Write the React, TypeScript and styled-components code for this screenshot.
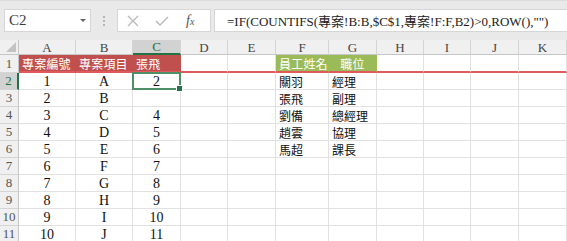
import React from 'react'
import styled, { createGlobalStyle } from 'styled-components'

const GlobalStyle = createGlobalStyle`
  html, body {
    margin: 0;
    padding: 0;
    background: #ffffff;
  }
  * {
    box-sizing: border-box;
  }
`

const SERIF = `"Liberation Serif", "Noto Sans CJK TC", serif`
const CJK = `"Noto Sans CJK TC", "Liberation Sans", sans-serif`

const Sheet = styled.div`
  width: 567px;
  height: 241px;
  overflow: hidden;
  background: #ffffff;
`

const FormulaBar = styled.div`
  display: flex;
  align-items: center;
  height: 40px;
  padding: 0 0 0 4px;
  background: #e9e9e9;
  border-top: 1px solid #dcdcdc;
`

const NameBox = styled.div`
  display: flex;
  align-items: center;
  justify-content: space-between;
  width: 87px;
  height: 23px;
  padding: 0 4px 0 4px;
  background: #ffffff;
  border: 1px solid #d6d6d6;
  font-family: ${SERIF};
  font-size: 15px;
  color: #3c3c3c;
`

const Caret = styled.span`
  width: 0;
  height: 0;
  border-left: 3px solid transparent;
  border-right: 3px solid transparent;
  border-top: 3px solid #666666;
`

const Grip = styled.div`
  display: flex;
  flex-direction: column;
  gap: 2px;
  margin: 0 12px 0 12px;
  span {
    width: 2px;
    height: 2px;
    background: #b4b4b4;
  }
`

const ButtonGroup = styled.div`
  display: flex;
  align-items: center;
  width: 94px;
  height: 23px;
  background: #ffffff;
  border: 1px solid #d6d6d6;
  padding-left: 8px;
  gap: 14px;
  color: #b0b0b0;
`

const Fx = styled.span`
  font-family: ${SERIF};
  font-style: italic;
  font-size: 14px;
  color: #555555;
  margin-left: 2px;
  sub {
    font-size: 10px;
    vertical-align: baseline;
  }
`

const FormulaInput = styled.div`
  flex: 1;
  height: 23px;
  margin-left: 3px;
  padding-left: 12px;
  display: flex;
  align-items: center;
  background: #ffffff;
  border: 1px solid #d6d6d6;
  border-right: none;
  font-family: ${SERIF};
  font-size: 13px;
  color: #222222;
  white-space: nowrap;
  overflow: hidden;
`

const Grid = styled.div`
  display: grid;
  grid-template-columns: 19px 57px 57px 48px 47px 48px 53px 48px 47px 47px 48px 48px;
  grid-auto-rows: 17px;
  grid-template-rows: 15px 18px;
`

const ColHead = styled.div<{ active?: boolean }>`
  display: flex;
  align-items: center;
  justify-content: center;
  background: ${({ active }) => (active ? '#d2d2d2' : '#f0f0f0')};
  border-right: 1px solid #d4d4d4;
  border-bottom: ${({ active }) => (active ? '2px solid #217346' : '1px solid #c6c6c6')};
  font-family: ${SERIF};
  font-size: 13px;
  line-height: 13px;
  color: ${({ active }) => (active ? '#217346' : '#444444')};
`

const Corner = styled.div`
  position: relative;
  background: #f0f0f0;
  border-right: 1px solid #c6c6c6;
  border-bottom: 1px solid #c6c6c6;
  &::after {
    content: '';
    position: absolute;
    right: 2px;
    bottom: 2px;
    width: 0;
    height: 0;
    border-left: 10px solid transparent;
    border-bottom: 10px solid #c3c3c3;
  }
`

const RowHead = styled.div<{ active?: boolean }>`
  display: flex;
  align-items: center;
  justify-content: center;
  background: ${({ active }) => (active ? '#d2d2d2' : '#f0f0f0')};
  border-bottom: 1px solid #d4d4d4;
  border-right: ${({ active }) => (active ? '2px solid #217346' : '1px solid #c6c6c6')};
  font-family: ${SERIF};
  font-size: 13px;
  line-height: 14px;
  color: ${({ active }) => (active ? '#217346' : '#555555')};
`

type Fill = 'red' | 'green' | undefined

const Cell = styled.div<{ fill?: Fill; align?: 'left' | 'center'; cjk?: boolean; redLine?: boolean }>`
  display: flex;
  align-items: center;
  justify-content: ${({ align }) => (align === 'center' ? 'center' : 'flex-start')};
  padding: 0 3px;
  white-space: nowrap;
  overflow: visible;
  line-height: 15px;
  background: ${({ fill }) => (fill === 'red' ? '#c0504d' : fill === 'green' ? '#9bbb59' : '#ffffff')};
  border-right: 1px solid ${({ fill }) => (fill === 'red' ? '#c0504d' : fill === 'green' ? '#9bbb59' : '#e1e1e1')};
  border-bottom: ${({ redLine }) => (redLine ? '2px solid #e2595c' : '1px solid #e1e1e1')};
  font-family: ${({ cjk }) => (cjk ? CJK : SERIF)};
  font-size: ${({ cjk }) => (cjk ? '12px' : '14px')};
  color: ${({ fill }) => (fill ? '#ffffff' : '#111111')};
  letter-spacing: ${({ fill }) => (fill ? '0.2px' : '0')};
`

const Selected = styled(Cell)`
  position: relative;
  &::after {
    content: '';
    position: absolute;
    left: -1px;
    top: -1px;
    right: -1px;
    bottom: -1px;
    border: 2px solid #4f8f67;
    pointer-events: none;
  }
  &::before {
    content: '';
    position: absolute;
    right: -3px;
    bottom: -3px;
    width: 5px;
    height: 5px;
    background: #217346;
    border: 1px solid #ffffff;
    z-index: 1;
  }
`

const columns = ['A', 'B', 'C', 'D', 'E', 'F', 'G', 'H', 'I', 'J', 'K']

const staff: [string, string][] = [
  ['關羽', '經理'],
  ['張飛', '副理'],
  ['劉備', '總經理'],
  ['趙雲', '協理'],
  ['馬超', '課長'],
]

const projects = ['A', 'B', 'C', 'D', 'E', 'F', 'G', 'H', 'I', 'J']
const results = ['2', '', '4', '5', '6', '7', '8', '9', '10', '11']

export default function App() {
  return (
    <Sheet>
      <GlobalStyle />
      <FormulaBar>
        <NameBox>
          C2
          <Caret />
        </NameBox>
        <Grip>
          <span />
          <span />
          <span />
        </Grip>
        <ButtonGroup>
          <svg width="14" height="14" viewBox="0 0 14 14">
            <path d="M2 2 L12 12 M12 2 L2 12" stroke="#b8b8b8" strokeWidth="1.3" fill="none" />
          </svg>
          <svg width="16" height="14" viewBox="0 0 16 14">
            <path d="M2 7 L6 11 L14 3" stroke="#b8b8b8" strokeWidth="1.4" fill="none" />
          </svg>
          <Fx>
            f<sub>x</sub>
          </Fx>
        </ButtonGroup>
        <FormulaInput>=IF(COUNTIFS(專案!B:B,$C$1,專案!F:F,B2)&gt;0,ROW(),"")</FormulaInput>
      </FormulaBar>
      <Grid>
        <Corner />
        {columns.map((c) => (
          <ColHead key={c} active={c === 'C'}>
            {c}
          </ColHead>
        ))}

        <RowHead>1</RowHead>
        <Cell fill="red" cjk redLine>專案編號</Cell>
        <Cell fill="red" cjk redLine>專案項目</Cell>
        <Cell fill="red" cjk redLine>張飛</Cell>
        <Cell redLine />
        <Cell redLine />
        <Cell fill="green" cjk redLine>員工姓名</Cell>
        <Cell fill="green" cjk align="center" redLine>職位</Cell>
        <Cell redLine />
        <Cell redLine />
        <Cell redLine />
        <Cell redLine />

        {projects.map((p, i) => {
          const row = i + 2
          const person = staff[i]
          return (
            <React.Fragment key={p}>
              <RowHead active={row === 2}>{row}</RowHead>
              <Cell align="center">{i + 1}</Cell>
              <Cell align="center">{p}</Cell>
              {row === 2 ? (
                <Selected align="center">{results[i]}</Selected>
              ) : (
                <Cell align="center">{results[i]}</Cell>
              )}
              <Cell />
              <Cell />
              <Cell cjk>{person ? person[0] : ''}</Cell>
              <Cell cjk>{person ? person[1] : ''}</Cell>
              <Cell />
              <Cell />
              <Cell />
              <Cell />
            </React.Fragment>
          )
        })}
      </Grid>
    </Sheet>
  )
}
